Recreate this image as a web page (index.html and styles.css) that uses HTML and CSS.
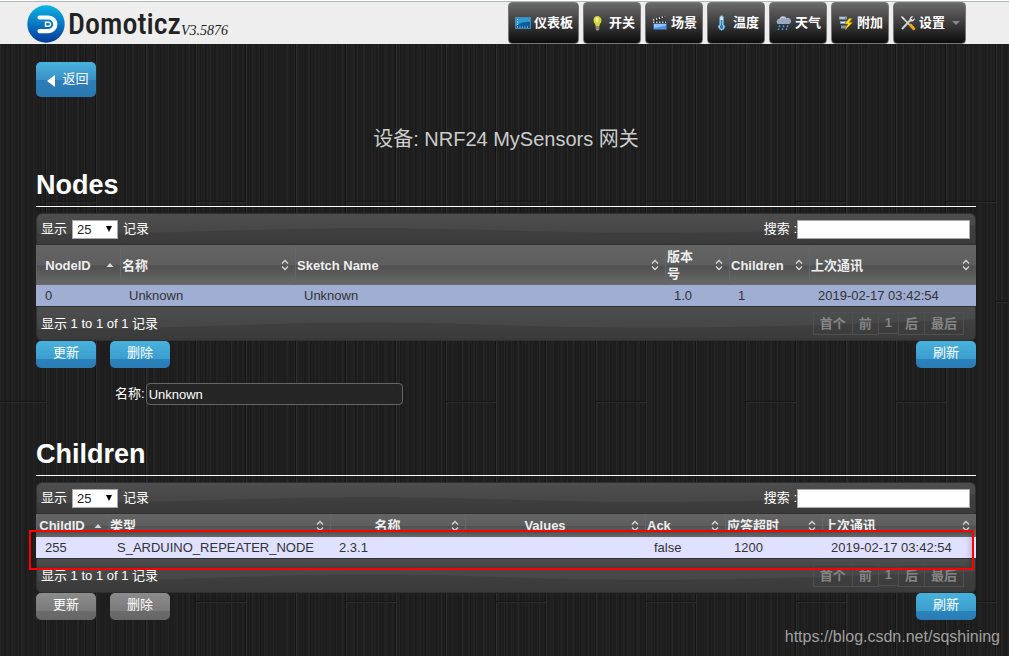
FILE: index.html
```html
<!DOCTYPE html>
<html lang="zh-CN">
<head>
<meta charset="utf-8">
<title>Domoticz</title>
<link rel="stylesheet" href="styles.css">
</head>
<body>
<svg class="defs" aria-hidden="true">
  <symbol id="sort-both" viewBox="0 0 8 12"><path d="M1 4.5 4 1.5 7 4.5M1 7.5 4 10.500 7 7.500" fill="none" stroke="#d8d8d8" stroke-width="1.3"/></symbol>
  <symbol id="sort-asc" viewBox="0 0 8 12"><path d="M0.500 8 4 4 7.500 8z" fill="#d8d8d8"/></symbol>
</svg>
<header class="topbar">
  <a class="brand" href="#">
    <svg class="brand-mark" viewBox="0 0 38 38" aria-hidden="true">
      <defs><linearGradient id="mark" x1="0" y1="0" x2="0" y2="1"><stop offset="0" stop-color="#0cb4e4"/><stop offset="1" stop-color="#063a9c"/></linearGradient></defs>
      <circle cx="19" cy="19" r="18.700" fill="url(#mark)"/>
      <path d="M12.500 12.500H21.500a6.800 6.800 0 0 1 0 13.600H12.500" fill="none" stroke="#fff" stroke-width="4.200" stroke-linecap="round"/>
      <path d="M18.500 17.300h3a2 2 0 0 1 0 4h-3z" fill="none" stroke="#fff" stroke-width="1.400"/>
    </svg>
    <span class="brand-name">Domoticz</span><span class="brand-version">V3.5876</span>
  </a>
  <nav class="menu">
    <a class="menu-item" href="#"><svg viewBox="0 0 16 16"><rect x="0.500" y="2.500" width="15" height="11" fill="#0d5d9c" stroke="#4c87ae"/><path d="M1 3h14v4Q8 6 1 11z" fill="#2f9bd6"/><path d="M2.500 4v8M2 12h12" stroke="#b8e4fa" stroke-dasharray="1 1.500"/></svg>仪表板</a>
    <a class="menu-item" href="#"><svg viewBox="0 0 16 16"><path d="M7 1a4.500 4.500 0 0 1 4.500 4.500c0 2.500-2 3-2.300 6H5.800c-.3-3-2.300-3.500-2.300-6A4.500 4.500 0 0 1 7 1z" fill="#d3d93c"/><path d="M5.500 3.500Q6.500 2 8.500 3L7 8z" fill="#fafab0"/><path d="M5.700 11.500h3.600v2.500l-1 1.500H6.700l-1-1.500z" fill="#a4a4a4"/><path d="M5.700 13h3.600" stroke="#444" stroke-width=".7"/></svg>开关</a>
    <a class="menu-item" href="#"><svg viewBox="0 0 16 16"><path d="M1 4.500 12.500.5l.8 2.200L2 6.500z" fill="#222"/><path d="M1 5 13 1.500" stroke="#ddd" stroke-width="1.800" stroke-dasharray="1.500 1.500"/><path d="M1 6.500h13v2H1z" fill="#222"/><path d="M1 7.300h13" stroke="#ccc" stroke-width="1.600" stroke-dasharray="1.500 1.500"/><path d="M1.500 8.500h13v6h-13z" fill="#4a94ea"/><path d="M2 9h12v1.500L2 13z" fill="#8fc4fb"/></svg>场景</a>
    <a class="menu-item" href="#"><svg viewBox="0 0 16 16"><path d="M5.800 2.500a1.800 1.800 0 0 1 3.600 0v7a3 3 0 1 1-3.600 0z" fill="#d9edf9" stroke="#5d9ccc"/><path d="M7.600 5v6" stroke="#2879c0" stroke-width="1.600"/><circle cx="7.600" cy="12" r="1.900" fill="#2879c0"/></svg>温度</a>
    <a class="menu-item" href="#"><svg viewBox="0 0 16 16"><path d="M3 9a2.500 2.500 0 0 1 .2-5A4 4 0 0 1 10.500 3 3 3 0 0 1 13 9z" fill="#9ba5bd"/><path d="M4 4.500a3.500 3.500 0 0 1 6-1" stroke="#d5dbe8" fill="none"/><path d="m4 10.500-1 1.500m5-1.500-1 1.500m5-1.500-1 1.500m-8 1.500-1 1.200m5-1.200-1 1.200m5-1.200-1 1.200" stroke="#3aa2ea" stroke-width="1.500"/></svg>天气</a>
    <a class="menu-item" href="#"><svg viewBox="0 0 16 16"><path d="M1 1.500h8v3H1zM2 6h7v3H2zM3 10.500h6v3H3z" fill="#8399aa"/><path d="M2 3h5M3 7.500h4" stroke="#e4edf2"/><path d="M11 3.500 7 9h3l-3 6 7.500-7.500h-3.500l3-4z" fill="#ffde1c" stroke="#c18d00" stroke-width=".5"/></svg>附加</a>
    <a class="menu-item" href="#"><svg viewBox="0 0 16 16"><path d="M3 3 13 13.500" stroke="#d5d5d5" stroke-width="1.800"/><path d="M1.500 1.500 4 4" stroke="#eee" stroke-width="1.500"/><path d="m10.500 10 3.300 3.700" stroke="#eda51f" stroke-width="3" stroke-linecap="round"/><path d="m2 14 8-8.500" stroke="#d2d2d2" stroke-width="2"/><path d="M13.500 1.500 11 3.500l1.500 1.500 2.200-2A3 3 0 0 1 10 6 3 3 0 0 1 13.500 1.500z" fill="#e4e4e4"/></svg>设置<span class="caret"></span></a>
  </nav>
</header>

<main class="page">
  <button class="btn btn-back" type="button"><svg viewBox="0 0 8 12" aria-hidden="true"><path d="M8 0v12L0 6z" fill="#fff"/></svg>返回</button>
  <h1 class="title">设备: NRF24 MySensors 网关</h1>

  <section>
    <h2 class="section-title">Nodes</h2>
    <div class="grid">
      <div class="grid-bar grid-top">
        <label class="field">显示 <select class="length"><option>25</option></select> 记录</label>
        <label class="field">搜索 :<input class="search" type="text"></label>
      </div>
      <table class="data">
        <colgroup><col class="w84"><col class="w175"><col><col class="w64"><col class="w80"><col class="w167"></colgroup>
        <thead><tr>
          <th><div class="head centered"><span>NodeID</span><svg><use href="#sort-asc"/></svg></div></th>
          <th><div class="head"><span>名称</span><svg><use href="#sort-both"/></svg></div></th>
          <th><div class="head"><span>Sketch Name</span><svg><use href="#sort-both"/></svg></div></th>
          <th><div class="head"><span>版本<br>号</span><svg><use href="#sort-both"/></svg></div></th>
          <th><div class="head"><span>Children</span><svg><use href="#sort-both"/></svg></div></th>
          <th><div class="head"><span>上次通讯</span><svg><use href="#sort-both"/></svg></div></th>
        </tr></thead>
        <tbody><tr class="selected"><td>0</td><td>Unknown</td><td>Unknown</td><td>1.0</td><td>1</td><td>2019-02-17 03:42:54</td></tr></tbody>
      </table>
      <div class="grid-bar grid-foot">
        <span>显示 1 to 1 of 1 记录</span>
        <div class="pager"><button type="button" disabled>首个</button><button type="button" disabled>前</button><button type="button" class="num" disabled>1</button><button type="button" disabled>后</button><button type="button" disabled>最后</button></div>
      </div>
    </div>
    <div class="actions"><button class="btn" type="button">更新</button><button class="btn" type="button">删除</button><button class="btn refresh" type="button">刷新</button></div>
    <div class="name-row"><label for="node-name">名称:</label><input id="node-name" type="text" value="Unknown"></div>
  </section>

  <section class="children">
    <h2 class="section-title">Children</h2>
    <div class="grid">
      <div class="grid-bar grid-top">
        <label class="field">显示 <select class="length"><option>25</option></select> 记录</label>
        <label class="field">搜索 :<input class="search" type="text"></label>
      </div>
      <table class="data compact">
        <colgroup><col class="w72"><col class="w222"><col class="w135"><col><col class="w80"><col class="w97"><col class="w154"></colgroup>
        <thead><tr>
          <th><div class="head centered"><span>ChildID</span><svg><use href="#sort-asc"/></svg></div></th>
          <th><div class="head"><span>类型</span><svg><use href="#sort-both"/></svg></div></th>
          <th><div class="head centered"><span>名称</span><svg><use href="#sort-both"/></svg></div></th>
          <th><div class="head centered"><span>Values</span><svg><use href="#sort-both"/></svg></div></th>
          <th><div class="head"><span>Ack</span><svg><use href="#sort-both"/></svg></div></th>
          <th><div class="head"><span>应答超时</span><svg><use href="#sort-both"/></svg></div></th>
          <th><div class="head"><span>上次通讯</span><svg><use href="#sort-both"/></svg></div></th>
        </tr></thead>
        <tbody><tr><td>255</td><td>S_ARDUINO_REPEATER_NODE</td><td>2.3.1</td><td></td><td>false</td><td>1200</td><td>2019-02-17 03:42:54</td></tr></tbody>
      </table>
      <div class="grid-bar grid-foot">
        <span>显示 1 to 1 of 1 记录</span>
        <div class="pager"><button type="button" disabled>首个</button><button type="button" disabled>前</button><button type="button" class="num" disabled>1</button><button type="button" disabled>后</button><button type="button" disabled>最后</button></div>
      </div>
      <div class="highlight"></div>
    </div>
    <div class="actions"><button class="btn" type="button" disabled>更新</button><button class="btn" type="button" disabled>删除</button><button class="btn refresh" type="button">刷新</button></div>
  </section>
</main>
<div class="watermark">https://blog.csdn.net/sqshining</div>
</body>
</html>
```
FILE: styles.css
```css
* { box-sizing: border-box; }

html { min-height: 100%; background: #1e1e1e; }

body {
  position: relative;
  min-height: 100vh;
  margin: 0;
  font: 13px/18px "Liberation Sans", "Noto Sans CJK SC", sans-serif;
  color: #fff;
  /* dark planks: staggered seams, plank edges, then fine vertical grain */
  background:
    url("data:image/svg+xml,%3Csvg xmlns='http://www.w3.org/2000/svg' width='150' height='400'%3E%3Cpath d='M0 201.500h50M50 301.500h50M100 1.500h50' stroke='%23161616'/%3E%3Cpath d='M0 202.500h50M50 302.500h50M100 2.500h50' stroke='%232b2b2b'/%3E%3C/svg%3E") 46px 0,
    linear-gradient(90deg, #2e2e2e 1px, transparent 1px 49px, #141414 49px) 46px 0 / 50px 100%,
    repeating-linear-gradient(90deg, rgba(255,255,255,.025) 0 1px, transparent 1px 7px),
    repeating-linear-gradient(90deg, rgba(0,0,0,.1) 0 1px, transparent 1px 5px),
    repeating-linear-gradient(90deg, rgba(255,255,255,.015) 0 1px, transparent 1px 3px),
    repeating-linear-gradient(90deg, rgba(255,255,255,.015) 0 2px, transparent 2px 11px),
    #1d1d1d;
}

button, input, select { font: inherit; margin: 0; }

.defs { position: absolute; width: 0; height: 0; }

.topbar {
  display: flex;
  justify-content: space-between;
  height: 44px;
  padding: 1px 43px 0 27px;
  background: #eee;
  box-shadow: inset 0 1px #fff, inset 0 2px #aeb8b4;
}

.brand { display: flex; align-items: center; color: #222; text-decoration: none; }
.brand-mark { width: 38px; height: 38px; margin: 3px 3px 0 0; }
.brand-name { padding-top: 3px; font: 500 30px/40px "Roboto Condensed", Roboto, "Liberation Sans", sans-serif; }
.brand-version { padding-top: 17px; font: italic 14px/18px "Liberation Serif", serif; }

.menu { display: flex; gap: 4px; padding-top: 1px; }
.menu-item {
  display: flex;
  align-items: center;
  gap: 3px;
  padding: 0 5px 0 6px;
  border: 1px solid #777;
  border-radius: 4px;
  background: linear-gradient(#6a6a6a, #3c3c3c 50%, #0c0c0c);
  color: #fff;
  font-weight: bold;
  text-decoration: none;
}
.menu-item svg { width: 16px; height: 16px; }
.caret { margin-left: 4px; border: 4px solid transparent; border-top-color: #888; border-bottom: 0; }

.page { padding: 18px 33px 36px 36px; }

.btn {
  min-width: 60px;
  height: 27px;
  padding: 0 16px 3px;
  border: 0;
  border-radius: 5px;
  background: linear-gradient(#48b2dc, #3c9dcd 66%, #2b83bd 67%, #2b7ab4);
  color: #fff;
}
.btn:disabled { background: linear-gradient(#8c8c8c, #7a7a7a 66%, #6b6b6b 67%, #666); }
.btn-back {
  display: flex;
  align-items: center;
  justify-content: center;
  gap: 7px;
  height: 35px;
  padding: 0 6px 2px 10px;
  background: linear-gradient(#48b2dc, #3a92c6 50%, #2b7eb9 51%, #2b78b2);
}
.btn-back svg { width: 8px; height: 12px; margin-top: 4px; }

.title { margin: 32px 0 20px; font-size: 20px; line-height: 20px; font-weight: normal; text-align: center; color: #ccc; }
.section-title { margin: 0 0 6px; padding-bottom: 5px; border-bottom: 1px solid #fff; font-size: 27px; line-height: 32px; font-weight: bold; }
.children { margin-top: 33px; }

.grid { position: relative; }
.grid-bar {
  display: flex;
  align-items: center;
  justify-content: space-between;
  border: 1px solid #303030;
  background:
    url("data:image/svg+xml,%3Csvg xmlns='http://www.w3.org/2000/svg' viewBox='0 0 940 32' preserveAspectRatio='none'%3E%3Cpath d='M0 21C130 22 220 15 330 15S520 21 640 20 850 15 940 12V32H0z' fill='%23000' fill-opacity='.1'/%3E%3C/svg%3E") 0 0 / 100% 100%,
    linear-gradient(#4e4e4e, #414141);
}
.grid-top { height: 32px; padding: 0 5px 0 4px; border-radius: 6px 6px 0 0; }
.grid-foot { height: 35px; padding: 0 11px 0 4px; border-radius: 0 0 6px 6px; }
.field { display: flex; align-items: center; gap: 5px; }
.length {
  appearance: none;
  width: 46px;
  height: 19px;
  padding: 0 4px;
  border: 1px solid #aaa;
  border-radius: 0;
  background: url("data:image/svg+xml,%3Csvg xmlns='http://www.w3.org/2000/svg' width='6' height='6'%3E%3Cpath d='M0 0h6L3 6z'/%3E%3C/svg%3E") 33px 5px no-repeat #fff;
  color: #222;
  line-height: 17px;
}
.field:has(.search) { gap: 0; }
.search { width: 173px; height: 19px; padding: 0 3px; border: 1px solid #aaa; background: #fff; }

.data { width: 100%; table-layout: fixed; border-collapse: collapse; color: #333; }
.w64 { width: 64px; } .w72 { width: 72px; } .w80 { width: 80px; } .w84 { width: 84px; }
.w97 { width: 97px; } .w135 { width: 135px; } .w154 { width: 154px; } .w167 { width: 167px; }
.w175 { width: 175px; } .w222 { width: 222px; }
.data thead { background: linear-gradient(#646464, #5e5e5e 50%, #505050 52%, #6a6a6a); }
.data th { height: 40px; padding: 0; box-shadow: inset 1px 0 #666; color: #eee; text-align: left; line-height: 17px; }
.head { display: flex; align-items: center; padding: 0 6px 0 2px; }
.head span { flex: 1; }
.head svg { flex: none; width: 8px; height: 12px; }
.head.centered { padding-left: 0; }
.centered span { padding-right: 6px; text-align: center; }
.data td { height: 21px; padding: 0 0 0 9px; line-height: 20px; background: #e0e0ff; }
.data .selected td { background: #9faed2; }
/* single-line headings whose lower edge runs under the marked area */
.compact th { height: 23px; vertical-align: top; }
.compact .head { height: 17px; overflow: hidden; }
.compact span { line-height: 17px; padding-top: 5px; }
.compact svg { margin-top: 6px; }

.pager { display: flex; align-items: center; }
.pager button { height: 23px; padding: 0 6px; border: 1px solid #505050; background: none; color: #858585; font-weight: bold; }
.pager button + button { margin-left: -1px; }
.pager .num { height: 21px; padding-bottom: 2px; }

.actions { display: flex; gap: 14px; }
.refresh { margin-left: auto; }

.name-row { display: flex; align-items: center; gap: 1px; margin-top: 15px; padding-left: 79px; }
.name-row input { width: 257px; height: 22px; padding: 0 2px; border: 1px solid #666; border-radius: 4px; background: #252525; color: #fff; }

.highlight {
  position: absolute;
  top: 48px;
  right: 2px;
  left: -7px;
  height: 40px;
  border: 2px solid #f00;
  box-shadow: inset 0 0 7px rgba(0,0,0,.3);
}

.watermark { position: absolute; right: 9px; bottom: 9px; color: #a0a0a0; font-size: 16px; line-height: 20px; }
```
